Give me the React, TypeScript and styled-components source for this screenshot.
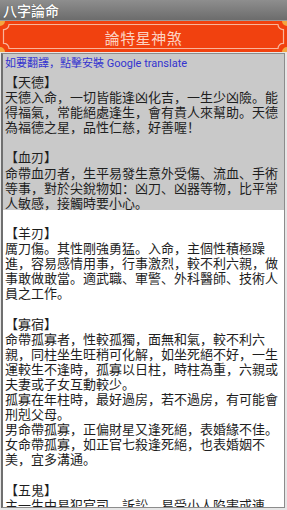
import styled, { createGlobalStyle } from 'styled-components';

interface ISection {
  title: string;
  body: string[];
}

const highlighted: ISection[] = [
  {
    title: '【天德】',
    body: ['天德入命，一切皆能逢凶化吉，一生少凶險。能得福氣，常能絕處逢生，會有貴人來幫助。天德為福德之星，品性仁慈，好善喔！'],
  },
  {
    title: '【血刃】',
    body: ['命帶血刃者，生平易發生意外受傷、流血、手術等事，對於尖銳物如：凶刀、凶器等物，比平常人敏感，接觸時要小心。'],
  },
];

const rest: ISection[] = [
  {
    title: '【羊刃】',
    body: ['厲刀傷。其性剛強勇猛。入命，主個性積極躁進，容易感情用事，行事激烈，較不利六親，做事敢做敢當。適武職、軍警、外科醫師、技術人員之工作。'],
  },
  {
    title: '【寡宿】',
    body: [
      '命帶孤寡者，性較孤獨，面無和氣，較不利六親，同柱坐生旺稍可化解，如坐死絕不好，一生運較生不逢時，孤寡以日柱，時柱為重，六親或夫妻或子女互動較少。',
      '孤寡在年柱時，最好過房，若不過房，有可能會刑剋父母。',
      '男命帶孤寡，正偏財星又逢死絕，表婚緣不佳。',
      '女命帶孤寡，如正官七殺逢死絕，也表婚姻不美，宜多溝通。',
    ],
  },
  {
    title: '【五鬼】',
    body: ['主一生中易犯官司、訴訟，易受小人陷害或連累，做事宜小心謹慎。'],
  },
];

const GlobalStyle = createGlobalStyle`
  body {
    margin: 0;
    background: #e6e6e6;
    font-family: "Noto Sans CJK SC", sans-serif;
  }
`;

const Screen = styled.div`
  width: 287px;
  height: 510px;
  overflow: hidden;
  display: flex;
  flex-direction: column;
`;

const TitleBar = styled.div`
  height: 20px;
  flex: none;
  display: flex;
  align-items: center;
  padding-left: 3px;
  background: linear-gradient(#8e8e8e, #6c6c6c);
  border-bottom: 1px solid #9c9c9c;
  color: #fff;
  font-size: 14px;
  font-weight: 500;
  text-shadow: 0 0 1px #444;
`;

const Banner = styled.div`
  height: 31px;
  flex: none;
  display: grid;
  background: #f4a640;
`;

const BannerArt = styled.svg`
  grid-area: 1 / 1;
  width: 287px;
  height: 31px;
`;

const BannerText = styled.div`
  grid-area: 1 / 1;
  align-self: center;
  justify-self: center;
  color: #fcd2c2;
  font-size: 15px;
  letter-spacing: 0.5px;
  line-height: 1;
  margin-top: 1px;
`;

const Panel = styled.div`
  flex: 1;
  margin: 1px 2px 2px 1px;
  border: 1px solid #8c8c8c;
  border-left: 2px solid #6f6f6f;
  background: #fff;
  overflow: hidden;
`;

const Highlight = styled.div`
  background: #c9c9c9;
  padding: 3px 3px 0 2px;
`;

const Plain = styled.div`
  padding: 0 3px 0 2px;
`;

const TranslateLink = styled.div`
  font-family: Roboto, "Noto Sans CJK SC", sans-serif;
  font-size: 11px;
  line-height: 14px;
  color: #3333d0;
  margin-bottom: 3px;
`;

const Section = styled.div<{ $gap: boolean }>`
  margin-top: ${p => (p.$gap ? '15.1px' : '0')};
  font-size: 13px;
  line-height: 15.1px;
  color: #1e1e1e;
`;

const Heading = styled.div``;

const Para = styled.div``;

const renderSections = (list: ISection[], firstGap: boolean) =>
  list.map((s, i) => (
    <Section key={s.title} $gap={i > 0 || firstGap}>
      <Heading>{s.title}</Heading>
      {s.body.map(p => (
        <Para key={p}>{p}</Para>
      ))}
    </Section>
  ));

const App = () => {
  return (
    <Screen>
      <GlobalStyle />
      <TitleBar>八字論命</TitleBar>
      <Banner>
        <BannerArt viewBox="0 0 287 31" preserveAspectRatio="none">
          <path
            d="M5,0 H282 A5,5 0 0 0 287,5 V26 A5,5 0 0 0 282,31 H5 A5,5 0 0 0 0,26 V5 A5,5 0 0 0 5,0 Z"
            fill="#f1410f"
          />
          <path
            d="M9,3.5 H278 A5,5 0 0 0 283.5,8.5 V22.5 A5,5 0 0 0 278,27.5 H9 A5,5 0 0 0 3.5,22.5 V8.5 A5,5 0 0 0 9,3.5 Z"
            fill="none"
            stroke="#f9b49a"
            strokeWidth="1.2"
          />
        </BannerArt>
        <BannerText>論特星神煞</BannerText>
      </Banner>
      <Panel>
        <Highlight>
          <TranslateLink>如要翻譯，點擊安裝 Google translate</TranslateLink>
          {renderSections(highlighted, false)}
        </Highlight>
        <Plain>{renderSections(rest, true)}</Plain>
      </Panel>
    </Screen>
  );
};

export default App;
